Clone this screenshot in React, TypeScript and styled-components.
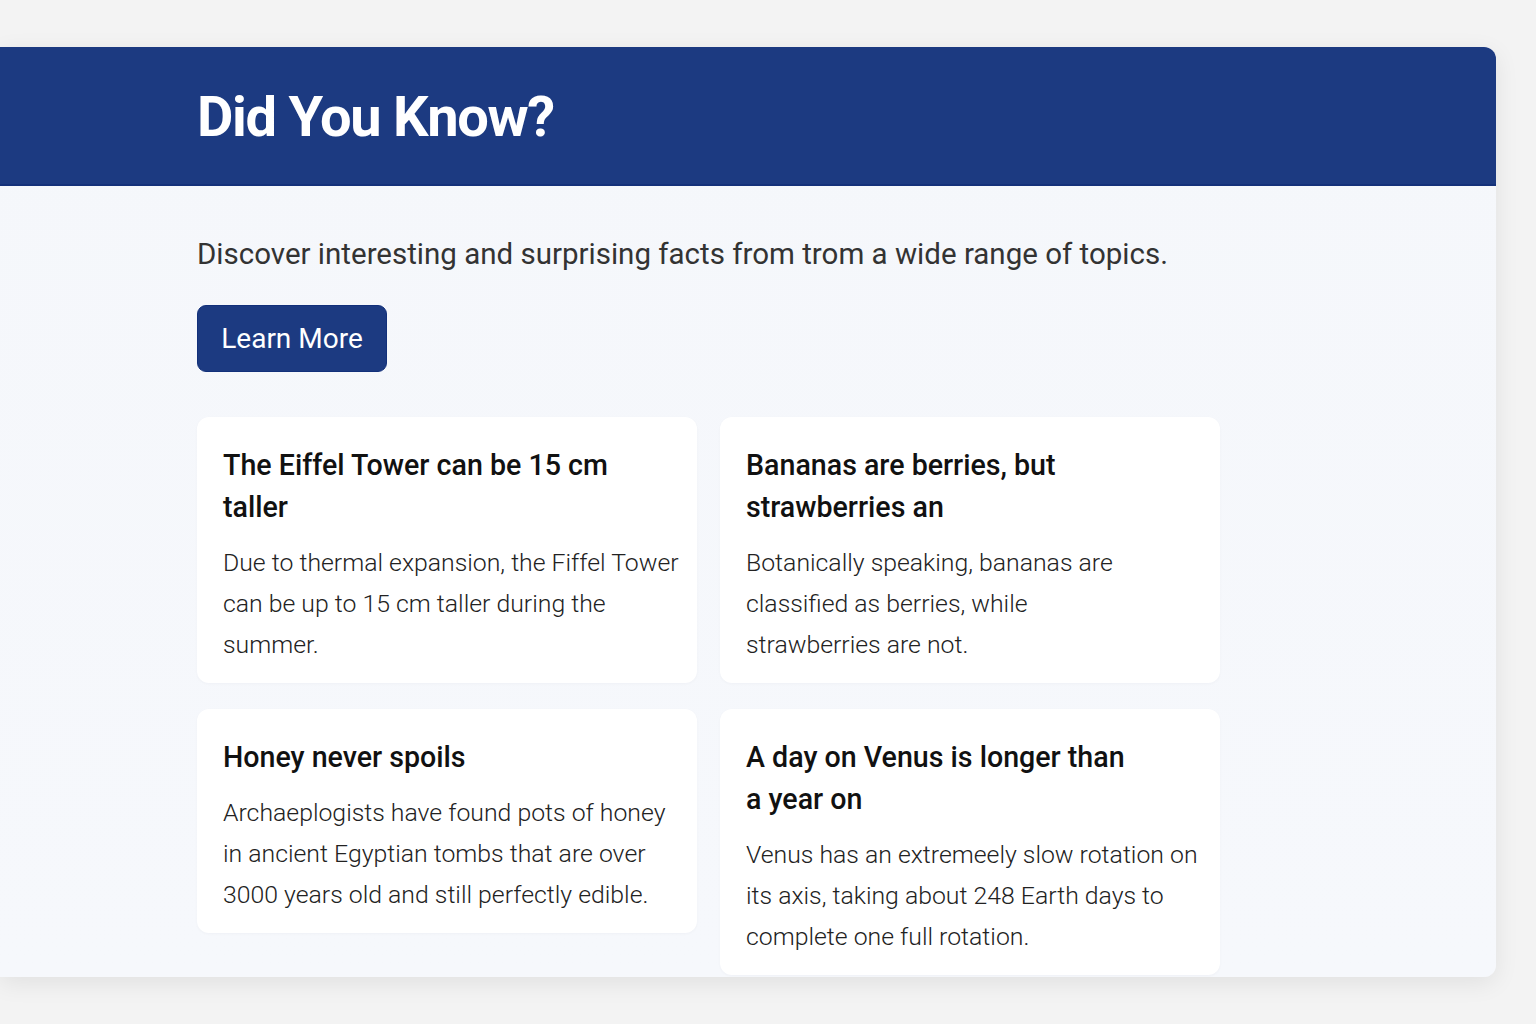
import styled, { createGlobalStyle } from 'styled-components'

const GlobalStyle = createGlobalStyle`
  html, body {
    margin: 0;
    padding: 0;
    background: #f3f3f3;
    font-family: Roboto, "Noto Sans", "Liberation Sans", sans-serif;
  }
`

const Page = styled.div`
  padding: 47px 40px 47px 0;
  min-height: 1024px;
  box-sizing: border-box;
`

const Panel = styled.section`
  width: 1496px;
  height: 930px;
  border-radius: 0 12px 12px 0;
  overflow: hidden;
  background: linear-gradient(180deg, #f5f7fb 0%, #f6f8fc 100%);
  box-shadow: 0 6px 24px rgba(0, 0, 0, 0.08);
`

const Header = styled.header`
  height: 139px;
  box-sizing: border-box;
  background: #1c3a81;
  border-bottom: 2px solid #14317a;
  padding: 38px 0 0 197px;
`

const Title = styled.h1`
  margin: 0;
  color: #ffffff;
  font-size: 56px;
  font-weight: 700;
  letter-spacing: -1.3px;
  line-height: 64px;
`

const Content = styled.div`
  padding: 48px 0 0 197px;
`

const Intro = styled.p`
  margin: 0;
  font-size: 29.5px;
  font-weight: 400;
  color: #333333;
  line-height: 40px;
`

const Button = styled.button`
  margin-top: 31px;
  width: 190px;
  height: 67px;
  border: 1px solid #12307a;
  border-radius: 9px;
  background: #1c3a81;
  color: #ffffff;
  font-family: inherit;
  font-size: 28px;
  font-weight: 400;
  cursor: pointer;
`

const Grid = styled.div`
  margin-top: 45px;
  display: grid;
  grid-template-columns: 500px 500px;
  column-gap: 23px;
  row-gap: 26px;
  align-items: start;
`

const Card = styled.article`
  background: #ffffff;
  border-radius: 12px;
  padding: 27px 12px 18px 26px;
  box-shadow: 0 1px 3px rgba(20, 30, 60, 0.03);
`

const CardTitle = styled.h3`
  margin: 0;
  max-width: 392px;
  font-size: 28.6px;
  font-weight: 500;
  line-height: 42px;
  color: #111111;
`

const CardText = styled.p<{ $width: number }>`
  margin: 14px 0 0;
  max-width: ${p => p.$width}px;
  font-size: 24.8px;
  font-weight: 300;
  line-height: 41px;
  color: #222222;
`

const facts = [
  {
    title: 'The Eiffel Tower can be 15 cm taller',
    text: 'Due to thermal expansion, the Fiffel Tower can be up to 15 cm taller during the summer.',
    width: 462,
  },
  {
    title: 'Bananas are berries, but strawberries an',
    text: 'Botanically speaking, bananas are classified as berries, while strawberries are not.',
    width: 400,
  },
  {
    title: 'Honey never spoils',
    text: 'Archaeplogists have found pots of honey in ancient Egyptian tombs that are over 3000 years old and still perfectly edible.',
    width: 462,
  },
  {
    title: 'A day on Venus is longer than a year on',
    text: 'Venus has an extremeely slow rotation on its axis, taking about 248 Earth days to complete one full rotation.',
    width: 462,
  },
]

export default function App() {
  return (
    <>
      <GlobalStyle />
      <Page>
        <Panel>
          <Header>
            <Title>Did You Know?</Title>
          </Header>
          <Content>
            <Intro>Discover interesting and surprising facts from trom a wide range of topics.</Intro>
            <Button>Learn More</Button>
            <Grid>
              {facts.map(f => (
                <Card key={f.title}>
                  <CardTitle>{f.title}</CardTitle>
                  <CardText $width={f.width}>{f.text}</CardText>
                </Card>
              ))}
            </Grid>
          </Content>
        </Panel>
      </Page>
    </>
  )
}
